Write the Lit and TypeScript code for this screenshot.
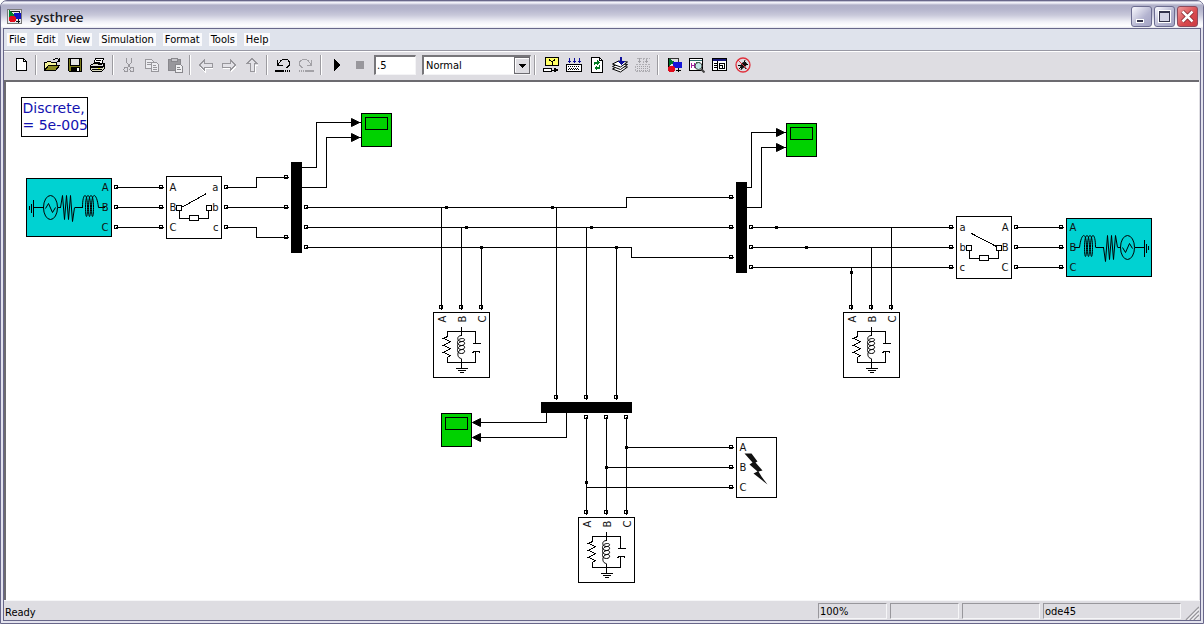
import { LitElement, html, svg, css, type TemplateResult } from "lit";
import { customElement } from "lit/decorators.js";

type Shape = TemplateResult<2>;

/* ---------- toolbar icons, each on a 16 x 16 grid ---------- */

const icons: Record<string, Shape> = {
  new: svg`<path d="M3.500 1.500h7l3 3v9h-10z" fill="#fff" stroke="#000"/><path d="M10.500 1.500v3h3" fill="none" stroke="#000"/>`,
  open: svg`<path d="M0.500 13.500v-8h2l1-1h3l1 1h5v3" fill="#f4f49a" stroke="#000"/><path d="M0.500 13.500l4-5h11l-4 5z" fill="#8c8c20" stroke="#000"/><path d="M9 2.500h1.500l1-1h2l1.500 2M15.500 1v3h-3" fill="none" stroke="#000"/>`,
  save: svg`<path d="M1.500 1.500h13v13h-12l-1-1z" fill="#7c7c1c" stroke="#000"/><path d="M4 2h8v6H4z" fill="#e4e4e4"/><path d="M3.500 2v6.500h9V2" fill="none" stroke="#000"/><path d="M4 10h9v4H4z" fill="#000"/><path d="M10 11h2v3h-2z" fill="#fff"/>`,
  print: svg`<path d="M5.500 1.500h8l-2 6h-8z" fill="#fff" stroke="#000"/><path d="M6 3.500h5M5 5.500h5" stroke="#000"/><path d="M0.500 8.500l3-2h11l-2 3h-12zM0.500 8.500v4l2 2h9l3-3v-5" fill="#d9d9c0" stroke="#000"/><path d="M1 10.500h11l3-3M2 12.500h10" fill="none" stroke="#000"/><path d="M8 11h2v1H8z" fill="#e5e500"/>`,
  cut: svg`<path d="M5.500 1v4l4 6M10.500 1v4l-4 6" fill="none" stroke="#98979c"/><circle cx="5" cy="12.500" r="2" fill="none" stroke="#98979c"/><circle cx="11" cy="12.500" r="2" fill="none" stroke="#98979c"/>`,
  copy: svg`<path d="M1.500 2.500h6l2 2v7h-8z" fill="#ececf0" stroke="#98979c"/><path d="M3 5.500h4M3 7.500h4" stroke="#98979c"/><path d="M7.500 5.500h5l2 2v7h-7z" fill="#ececf0" stroke="#98979c"/><path d="M9 8.500h3M9 10.500h4M9 12.500h4" stroke="#98979c"/>`,
  paste: svg`<path d="M1.500 2.500h12v11h-12z" fill="#98979c" stroke="#88878c"/><path d="M4.500 1.500h6v3h-6z" fill="#c8c7cc" stroke="#88878c"/><path d="M8.500 7.500h5l2 2v6h-7z" fill="#f0f0f2" stroke="#88878c"/><path d="M10 10.500h3M10 12.500h4" stroke="#88878c"/>`,
  back: svg`<path d="M2 9.500l5 5v-3h8" fill="none" stroke="#fff"/><path d="M1.500 8l5-5v3h8v4h-8v3z" fill="#e3e2e7" stroke="#98979c"/>`,
  forward: svg`<path d="M2 11.500h8v3l5-5" fill="none" stroke="#fff"/><path d="M14.500 8l-5-5v3h-8v4h8v3z" fill="#e3e2e7" stroke="#98979c"/>`,
  up: svg`<path d="M11.500 8v8M11 8.500h3" fill="none" stroke="#fff"/><path d="M8 1.500l5 5h-3v8h-4v-8h-3z" fill="#e3e2e7" stroke="#98979c"/>`,
  undo: svg`<path d="M2.500 3v5h5M3 7.500l3-4 3-1.500h3l2.500 3v3l-3 3" fill="none" stroke="#000"/><path d="M0 13h9v2H0zM10 13h1v2h-1zM12 13h1v2h-1zM14 13h1v2h-1z" fill="#000"/>`,
  redo: svg`<path d="M13.500 3v5h-5M13 7.500l-3-4-3-1.500H5L1.500 5v3l3 3" fill="none" stroke="#a3a2a7"/><path d="M7 13h9v2H7zM5 13h1v2H5zM3 13h1v2H3zM1 13h1v2H1z" fill="#a3a2a7"/>`,
  play: svg`<path d="M5 2v12l7-6z" fill="#000"/>`,
  stop: svg`<path d="M4 4h8v8H4z" fill="#98979c"/>`,
  library: svg`<path d="M2.500 0.500h13v8h-13z" fill="#ffff66" stroke="#000"/><path d="M6.500 2v1l2.500 2 2.500-2V2M9 5v3" fill="none" stroke="#000"/><path d="M0.500 11.500h8v3h-8z" fill="#fff" stroke="#000"/><path d="M9 13h3" stroke="#000"/><path d="M11 10.500l5 2.500-5 2.500z" fill="#000"/>`,
  debug: svg`<path d="M3.500 1v5M8.500 1v5M13.500 1v5M2 4.500h3M7 4.500h3M12 4.500h3" stroke="#10109a"/><path d="M0.500 7.500h15v7h-15z" fill="#fff" stroke="#000"/><path d="M2 9.500h12M2 12.500h12" stroke="#000" stroke-dasharray="1 1"/><path d="M3 11h10" stroke="#000" stroke-dasharray="1 1"/>`,
  refresh: svg`<path d="M2.500 0.500h8l3 3v12h-11z" fill="#fff" stroke="#000"/><path d="M10.500 0.500v3h3" fill="none" stroke="#000"/><path d="M5.500 8V6h4M10.500 8v3h-4" fill="none" stroke="#007a20" stroke-width="1.500"/><path d="M8 3l3 3-3 2.500zM8 8.500l-3 2.500 3 2.500z" fill="#007a20"/>`,
  build: svg`<g shape-rendering="auto"><path d="M0.500 12l6-3 9 1-7 5z" fill="#fff" stroke="#000"/><path d="M0.500 9.500l6-3 9 1-7 5z" fill="#fff" stroke="#000"/><path d="M0.500 7l6-3 9 1-7 5z" fill="#fff" stroke="#000"/></g><path d="M8 0h2v4H8z" fill="#10109a"/><path d="M5 4h8L9 8z" fill="#10109a"/>`,
  buildOff: svg`<path d="M4.500 1v5M11.500 1v5M3 4.500h3M10 4.500h3" stroke="#a3a2a7"/><path d="M0.500 7.500h14v7h-14zM8 1v6M1.500 1.500h13" fill="none" stroke="#b0afb4" stroke-dasharray="2 1"/><path d="M2 9.500h12M2 11.500h12M2 13.500h12" stroke="#a3a2a7" stroke-dasharray="1 1"/>`,
  model: svg`<path d="M2 1.500h10v4" fill="none" stroke="#333"/><path d="M2 1l7 4-7 5z" fill="#00742c"/><path d="M7 5h9v6H7z" fill="#1616d8"/><path d="M2.500 1v9M12.500 11v4M10 13.500h5" stroke="#000"/><circle cx="5.500" cy="12" r="3.500" fill="#e00a1c"/>`,
  explorer: svg`<path d="M0.500 1.500h13v12h-13z" fill="#fff" stroke="#000"/><path d="M1 3h12" stroke="#2c6a6a" stroke-width="1"/><path d="M2.500 6v5M2 8.500h3M5.500 6v5" stroke="#a020a0"/><path d="M7 5.500h4" stroke="#1c7c3c"/><g shape-rendering="auto"><circle cx="9.500" cy="9" r="3.500" fill="#bfe6e6" stroke="#444"/><path d="M12 12l3.500 3.500" stroke="#444" stroke-width="2"/></g>`,
  browser: svg`<path d="M0.500 1.500h14v12h-14z" fill="#fff" stroke="#000"/><path d="M1 3h13" stroke="#18187a" stroke-width="2"/><path d="M5.500 4v10M1.500 6.500h3M1.500 8.500h3M1.500 10.500h3" stroke="#000"/><path d="M7.500 6.500h5v5h-5zM7 8.500h3v3" fill="#fff" stroke="#000"/>`,
  bug: svg`<g shape-rendering="auto"><path d="M4 12l7-7M3 8.500h4M9 7.500h4M6 13l1-3M10 3l-1 3M11 12l-2-3" stroke="#000"/><path d="M5 9l3-4 4 1-1 3-4 3z" fill="#111"/><circle cx="8" cy="8" r="7" fill="none" stroke="#e0303c" stroke-width="1.300"/><path d="M3 3l10 10" stroke="#e0303c"/></g>`,
};

interface Tool { icon: string; label: string; off?: boolean }

const fileTools: Tool[][] = [
  [{ icon: "new", label: "New" }],
  [{ icon: "open", label: "Open" }, { icon: "save", label: "Save" }, { icon: "print", label: "Print" }],
  [{ icon: "cut", label: "Cut", off: true }, { icon: "copy", label: "Copy", off: true }, { icon: "paste", label: "Paste", off: true }],
  [{ icon: "back", label: "Back", off: true }, { icon: "forward", label: "Forward", off: true }, { icon: "up", label: "Up", off: true }],
  [{ icon: "undo", label: "Undo" }, { icon: "redo", label: "Redo", off: true }],
  [{ icon: "play", label: "Start simulation" }, { icon: "stop", label: "Stop", off: true }],
];
const modelTools: Tool[][] = [
  [{ icon: "library", label: "Library link" }, { icon: "debug", label: "Model debug" }, { icon: "refresh", label: "Refresh" },
   { icon: "build", label: "Build" }, { icon: "buildOff", label: "Build subsystem", off: true }],
  [{ icon: "model", label: "Library browser" }, { icon: "explorer", label: "Model explorer" }, { icon: "browser", label: "Model browser" }, { icon: "bug", label: "Debugger" }],
];

/* ---------- the block diagram ---------- */

type Point = [number, number];

const wires: Point[][] = [
  [[115, 187], [163, 187]], [[115, 207], [163, 207]], [[115, 227], [163, 227]],
  [[225, 187], [256, 187], [256, 177], [288, 177]],
  [[225, 207], [288, 207]],
  [[225, 227], [256, 227], [256, 237], [288, 237]],
  [[301, 167], [316, 167], [316, 122], [360, 122]],
  [[301, 187], [326, 187], [326, 137], [360, 137]],
  [[305, 207], [626, 207], [626, 197], [733, 197]],
  [[305, 227], [733, 227]],
  [[305, 247], [631, 247], [631, 257], [733, 257]],
  [[441, 207], [441, 309]], [[461, 227], [461, 309]], [[481, 247], [481, 309]],
  [[556, 207], [556, 399]], [[586, 227], [586, 399]], [[616, 247], [616, 399]],
  [[746, 187], [751, 187], [751, 132], [785, 132]],
  [[746, 207], [761, 207], [761, 147], [785, 147]],
  [[750, 227], [953, 227]], [[750, 247], [953, 247]], [[750, 267], [953, 267]],
  [[851, 267], [851, 309]], [[871, 247], [871, 309]], [[891, 227], [891, 309]],
  [[1015, 227], [1063, 227]], [[1015, 247], [1063, 247]], [[1015, 267], [1063, 267]],
  [[546, 412], [546, 422], [472, 422]], [[566, 412], [566, 437], [472, 437]],
  [[586, 416], [586, 514]], [[606, 416], [606, 514]], [[626, 416], [626, 514]],
  [[626, 447], [733, 447]], [[606, 467], [733, 467]], [[586, 487], [733, 487]],
];

const junctions: Point[] = [
  [446, 207], [552, 207], [466, 227], [591, 227], [481, 247], [616, 247],
  [776, 227], [806, 247], [851, 272], [626, 447], [606, 467], [586, 482],
];

const grid = (xs: number[], ys: number[]): Point[] => xs.flatMap((x) => ys.map((y): Point => [x, y]));

/* Top left corner of each port square. */
const ports: Point[] = [
  ...grid([114, 159, 224], [185, 205, 225]),
  ...grid([284], [175, 205, 235]),
  ...grid([304], [205, 225, 245]),
  ...grid([729], [195, 225, 255]),
  ...grid([749, 949, 1014, 1059], [225, 245, 265]),
  ...grid([439, 459, 479, 849, 869, 889], [305]),
  ...grid([554, 584, 614], [395]),
  ...grid([584, 604, 624], [415, 510]),
  ...grid([729], [445, 465, 485]),
];

const at = (x: number, y: number) => `translate(${x} ${y})`;

const labels = (names: string, x: number, y: number, end = false): Shape =>
  svg`${[...names].map((n, i) => svg`<text class=${end ? "tag end" : "tag"} x=${x} y=${y + i * 20}>${n}</text>`)}`;

const sourceArt = svg`
    <path class="line" d="M3 27v4M5 25v9M7 21v17M7 29h10M31 29h3M48 29h8M73 29h5"/>
    <g class="smooth">
      <path class="line" d="M34 29l2-12 2 24 2-24 2 24 2-24 2 26 2-14
        M56 29c0-16 5-16 5 0 0 12-2 12-2 0 0-16 5-16 5 0 0 12-2 12-2 0 0-16 5-16 5 0 0 12-2 12-2 0 0-16 5-16 7 0h2"/>
      <ellipse class="line" cx="24" cy="29" rx="7" ry="12"/>
      <path class="line" d="M19 30l3-5 4 9 3-5"/>
    </g>`;

const source = (x: number, y: number, flip: boolean): Shape => svg`
  <g transform=${at(x, y)}>
    <rect class="teal" width="85" height="58"/>
    ${flip ? svg`<g transform="translate(85 0) scale(-1 1)">${sourceArt}</g>` : sourceArt}
    ${flip ? labels("ABC", 3, 12) : labels("ABC", 82, 12, true)}
  </g>`;

const breaker = (x: number, y: number, left: string, right: string, flip: boolean): Shape => svg`
  <g transform=${at(x, y)}>
    <rect class="box" width="55" height="62"/>
    ${labels(left, 3, 14)}${labels(right, 52, 14, true)}
    <path class="line" d=${flip ? "M15 17L40 30" : "M15 31L40 17"}/>
    <path class="line" d="M13 34v8h10M42 34v8h-10"/>
    <rect class="box" x="10" y="29" width="5" height="5"/>
    <rect class="box" x="40" y="29" width="5" height="5"/>
    <rect class="box" x="23" y="39" width="9" height="5"/>
  </g>`;

const load = (x: number, y: number): Shape => svg`
  <g transform=${at(x, y)}>
    <rect class="box" width="56" height="65"/>
    ${["A", "B", "C"].map((n, i) => svg`<text class="tag" transform=${`translate(${12 + i * 20} 10) rotate(-90)`}>${n}</text>`)}
    <path class="line" d="M28 14v5M14 24v-5h28v12M14 45v5h28v-11M28 50v6M28 19v4M28 46v4M22 56h12M24 58h8M26 60h4M39 31h8"/>
    <path class="line" d="M14 24l-4 2 7 3-7 4 7 3-7 4 7 3-3 2"/>
    <path class="line smooth" d="M28 23c-5 0-5 6 0 6 4 0 4-3 1-3-6 0-7 7-1 7 4 0 4-4 1-4-6 0-7 8-1 8 4 0 4-4 1-4-6 0-7 8-1 8 4 0 4-4 1-4-6 0-6 9-1 9"/>
    <path class="line" d="M39 40l2-1h4l2 1"/>
  </g>`;

const scope = (x: number, y: number): Shape => svg`
  <g transform=${at(x, y)}>
    <rect class="green" width="30" height="33"/>
    <rect class="line" x="4" y="4" width="22" height="12"/>
  </g>`;

const arrow = (x: number, y: number, turn = false): Shape =>
  svg`<path class="solid smooth" d=${turn ? "M0 0l8-4v8z" : "M0 0l-8-4v8z"} transform=${at(x, y)}/>`;

const diagram = svg`
  ${ports.map(([x, y]) => svg`<rect class="box" x=${x} y=${y} width="3" height="3"/>`)}
  ${wires.map((w) => svg`<polyline class="line" points=${w.map((p) => p.join(",")).join(" ")}/>`)}
  ${junctions.map(([x, y]) => svg`<rect class="solid" x=${x - 1} y=${y - 1} width="2" height="2"/>`)}
  <rect class="solid" x="291" y="162" width="10" height="90"/>
  <rect class="solid" x="736" y="182" width="10" height="90"/>
  <rect class="solid" x="541" y="402" width="90" height="10"/>
  ${[122, 137].map((y) => arrow(359, y))}
  ${[132, 147].map((y) => arrow(784, y))}
  ${[422, 437].map((y) => arrow(472, y, true))}
  ${scope(361, 113)}${scope(786, 123)}${scope(441, 413)}
  ${source(26, 178, false)}${source(1066, 218, true)}
  ${breaker(166, 176, "ABC", "abc", false)}${breaker(956, 216, "abc", "ABC", true)}
  ${load(433, 312)}${load(843, 312)}${load(578, 517)}
  <g transform="translate(736 437)">
    <rect class="box" width="40" height="60"/>
    ${labels("ABC", 3, 13)}
    <path class="bolt smooth" d="M8 16h7l6 8-2 1 7 8-4 1 3 5 6 8-14-11 4-2-8-7 3-2z"/>
  </g>
  <g transform="translate(21 97)">
    <rect class="box" width="66" height="39"/>
    <svg width="66" height="39"><text class="note" x="1" y="15">Discrete,</text><text class="note" x="1" y="32">= 5e-005</text></svg>
  </g>`;

@customElement("app-root")
export class AppRoot extends LitElement {
  static styles = css`
    :host { display: block; background: #fff; font: 11px/13px "DejaVu Sans Condensed", "Noto Sans", sans-serif; color: #000; }
    * { box-sizing: border-box; }
    button, input, select { font: inherit; color: inherit; margin: 0; }
    button { border: 0; padding: 0; background: none; }
    .window { display: flex; flex-direction: column; height: 100vh; border: 1px solid #68678a; border-radius: 7px 7px 0 0; padding: 0 2px 2px; background: #e3e3ee; overflow: hidden; }
    .title { display: flex; align-items: center; gap: 8px; height: 27px; flex: none; margin: 0 -2px; padding: 4px 5px 0 6px;
      background: linear-gradient(#8f8fae 0, #f3f3fa 1px, #f0f0f8 2px, #b0b0c8 4px, #b4b4cc 8px, #c8c8da 14px, #f2f2f8 21px, #fff 25px, #e4e4ee 27px); }
    .title h1 { flex: 1; margin: 0; font: 600 13px/18px "Open Sans", "Noto Sans", sans-serif; color: #1c1c24; }
    .controls { display: flex; gap: 2px; }
    .control { width: 21px; height: 21px; border: 1px solid #6c6c90; border-radius: 3px; background: linear-gradient(135deg, #fafaff, #b4b4d0 60%, #a4a4c4); }
    .close { border-color: #8c4a5c; background: linear-gradient(135deg, #ee9a9a, #d8474d 60%, #cc3c44); }
    .control svg, .tool svg, .logo { display: block; margin: auto; }
    .inner { display: flex; flex-direction: column; flex: 1; min-height: 0; border: 1px solid #68678a; background: #dedde2; }
    .menu { display: flex; gap: 7px; height: 22px; flex: none; align-items: center; padding: 0 3px; background: #dfe3ec; border-bottom: 1px solid #9898a4; }
    .menu button { padding: 0 2px; height: 13px; background: #fafafc; white-space: nowrap; }
    .bar { display: flex; align-items: center; height: 29px; flex: none; padding: 0 5px 2px; border-top: 1px solid #fff; }
    .tool { width: 23px; height: 23px; flex: none; }
    .sep { width: 2px; height: 20px; flex: none; margin: 0 3px; background: linear-gradient(90deg, #9c9ba0 50%, #fff 50%); }
    .time { width: 42px; height: 20px; margin: 0 6px 0 3px; padding: 0 1px; border: 1px solid; border-width: 2px 1px 1px 2px; border-color: #77767a #f4f4f6 #f4f4f6 #77767a; background: #fff; border-radius: 0; }
    .pick { position: relative; width: 109px; height: 20px; }
    .pick select { width: 100%; height: 20px; padding: 0 2px; appearance: none; background: #fff; border: 1px solid; border-width: 2px 1px 1px 2px; border-color: #77767a #f4f4f6 #f4f4f6 #77767a; border-radius: 0; }
    .drop { position: absolute; right: 1px; top: 2px; width: 16px; height: 17px; pointer-events: none; }
    .canvas { flex: 1; min-height: 0; border: solid #6c6b70; border-width: 2px 0 0 2px; margin-right: 1px; background: #fff; }
    .canvas svg { display: block; width: 100%; height: 100%; }
    .line { fill: none; stroke: #000; }
    .box { fill: #fff; stroke: #000; }
    .teal { fill: #00d2d2; stroke: #000; }
    .green { fill: #00d200; stroke: #000; }
    .solid { fill: #000; stroke: #000; }
    .bolt { fill: #111; }
    .smooth, .smooth * { shape-rendering: auto; }
    .tag { font: 10px "DejaVu Sans", sans-serif; fill: #111; }
    .end { text-anchor: end; }
    .note { font: 14px "DejaVu Sans", sans-serif; fill: #1212b0; }
    .status { display: flex; gap: 3px; height: 20px; flex: none; align-items: center; padding: 1px 1px 0 0; border-top: 1px solid #f6f6f8; }
    .ready { flex: 1; padding: 2px 0 0 1px; }
    .cell { height: 16px; padding: 1px; border: 1px solid; border-color: #98979c #f6f6f8 #f6f6f8 #98979c; }
    .narrow { width: 69px; }
    .medium { width: 78px; }
    .wide { width: 138px; }
    .grip { width: 14px; height: 14px; margin-left: 1px; align-self: flex-end; }
  `;

  private tools(groups: Tool[][]) {
    return groups.map((group, i) => html`
      ${i ? html`<span class="sep"></span>` : ""}
      ${group.map((t) => html`
        <button class="tool" aria-label=${t.label} ?disabled=${t.off}>
          <svg width="16" height="16" shape-rendering="crispEdges">${icons[t.icon]}</svg>
        </button>`)}`);
  }

  render() {
    return html`
      <div class="window">
        <header class="title">
          <svg class="logo" width="15" height="15" shape-rendering="crispEdges">
            <path d="M0.500 0.500h14v14h-14z" fill="#e8e8ec" stroke="#777"/>
            <path d="M3 2.500h9v3" fill="none" stroke="#222"/><path d="M2 1l6 5-6 5z" fill="#00842c"/><path d="M7 4h7v6H7z" fill="#1414c0"/>
            <path d="M11.500 10v4M9 12.500h4" stroke="#111"/><circle cx="5.500" cy="10" r="3.500" fill="#e00a1c"/>
          </svg>
          <h1>systhree</h1>
          <div class="controls">
            <button class="control" aria-label="Minimize"><svg width="19" height="19"><path d="M4 12h8v4H4z" fill="#fff"/><path d="M5 13h6v2H5z" fill="#33334a"/></svg></button>
            <button class="control" aria-label="Maximize"><svg width="19" height="19" shape-rendering="crispEdges"><path d="M3.500 3.500h12v12h-12z" fill="none" stroke="#fff"/><path d="M4.500 5.500h10v9h-10z" fill="#d4d4e4" stroke="#33334a"/><path d="M4 5h11" stroke="#33334a" stroke-width="2"/></svg></button>
            <button class="control close" aria-label="Close"><svg width="19" height="19"><path d="M4.500 4.500l10 10M14.500 4.500l-10 10" stroke="#7c2028" stroke-width="4"/><path d="M4.500 4.500l10 10M14.500 4.500l-10 10" stroke="#fff" stroke-width="2.500"/></svg></button>
          </div>
        </header>
        <div class="inner">
          <nav class="menu">
            ${["File", "Edit", "View", "Simulation", "Format", "Tools", "Help"].map((m) => html`<button>${m}</button>`)}
          </nav>
          <div class="bar">
            ${this.tools(fileTools)}
            <input class="time" aria-label="Stop time" .value=${".5"} />
            <div class="pick">
              <select aria-label="Simulation mode"><option>Normal</option></select>
              <svg class="drop" viewBox="0 0 16 17" shape-rendering="crispEdges"><path d="M0.500 0.500h15v16h-15z" fill="#dedde2" stroke="#6c6b70"/><path d="M1.500 15v-13.500h13" fill="none" stroke="#fff"/><path d="M4 7h8l-4 4z"/></svg>
            </div>
            <span class="sep"></span>
            ${this.tools(modelTools)}
          </div>
          <main class="canvas">
            <svg shape-rendering="crispEdges" role="img" aria-label="systhree block diagram">
              <g transform="translate(-5.5 -81.5)">${diagram}</g>
            </svg>
          </main>
          <footer class="status">
            <span class="ready">Ready</span>
            <span class="cell narrow">100%</span>
            <span class="cell narrow"></span>
            <span class="cell medium"></span>
            <span class="cell wide">ode45</span>
            <svg class="grip"><path d="M1 14L14 1M5 14l9-9M9 14l5-5" stroke="#98979c" stroke-width="1.500"/><path d="M2.500 14L14 2.500M6.500 14L14 6.500M10.500 14l3.500-3.500" stroke="#fff"/></svg>
          </footer>
        </div>
      </div>`;
  }
}
